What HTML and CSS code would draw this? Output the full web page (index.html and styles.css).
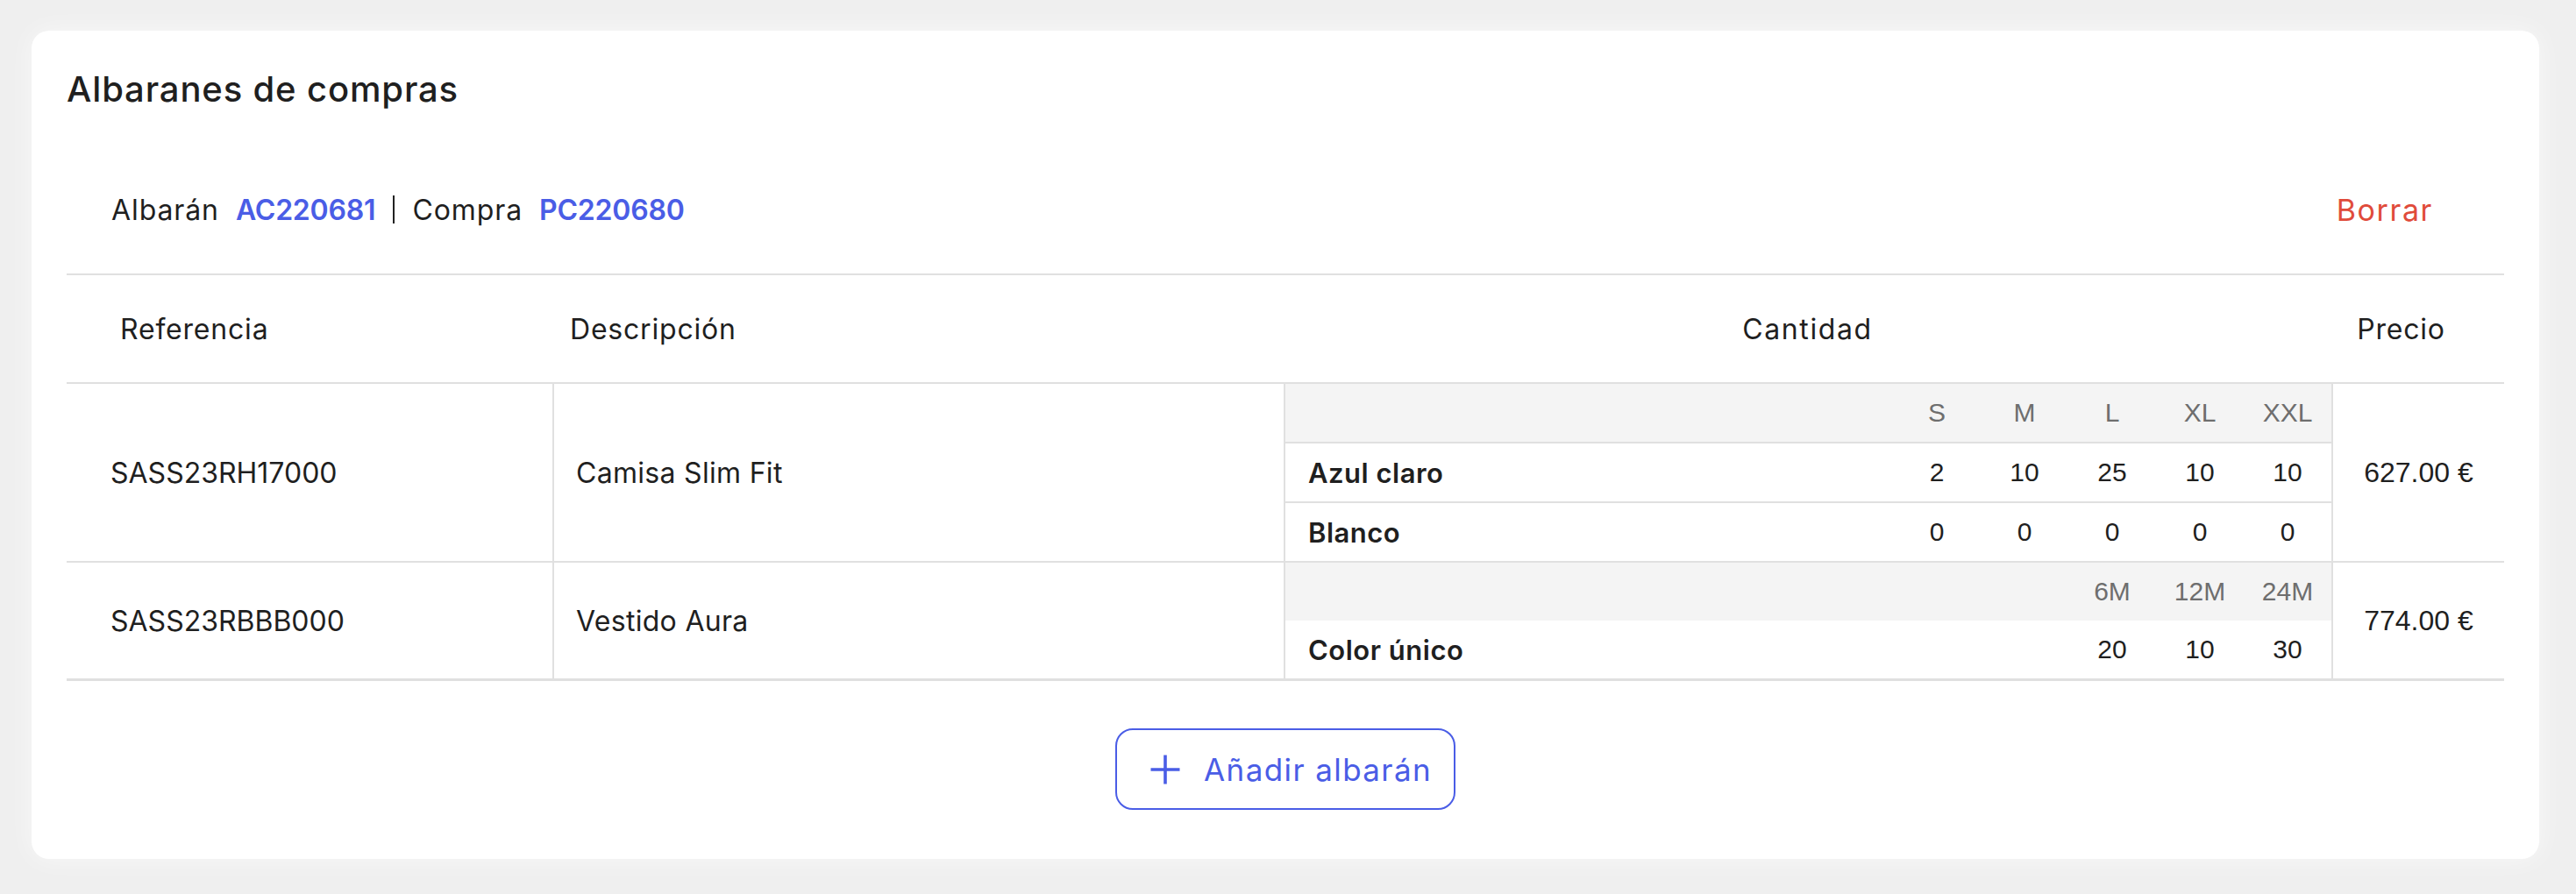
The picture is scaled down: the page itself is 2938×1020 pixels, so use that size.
FILE: index.html
```html
<!DOCTYPE html>
<html lang="es">
<head>
<meta charset="utf-8">
<title>Albaranes de compras</title>
<link rel="stylesheet" href="styles.css">
</head>
<body>
<div class="page">
  <section class="card">
    <h1 class="title">Albaranes de compras</h1>

    <div class="info">
      <div class="info-left">
        <span class="lead">Albarán</span>
        <a class="code">AC220681</a>
        <span class="sep"></span>
        <span class="lead">Compra</span>
        <a class="code">PC220680</a>
      </div>
      <button class="delete">Borrar</button>
    </div>

    <div class="table">
      <div class="row head">
        <div class="cell c-ref">Referencia</div>
        <div class="cell c-desc">Descripción</div>
        <div class="cell c-qty">Cantidad</div>
        <div class="cell c-price">Precio</div>
      </div>

      <div class="row item">
        <div class="cell c-ref">SASS23RH17000</div>
        <div class="cell c-desc">Camisa Slim Fit</div>
        <div class="cell c-qty">
          <div class="sizes lined">
            <div class="srow five shead"><span class="lbl"></span><span>S</span><span>M</span><span>L</span><span>XL</span><span>XXL</span></div>
            <div class="srow five"><span class="lbl">Azul claro</span><span>2</span><span>10</span><span>25</span><span>10</span><span>10</span></div>
            <div class="srow five"><span class="lbl">Blanco</span><span>0</span><span>0</span><span>0</span><span>0</span><span>0</span></div>
          </div>
        </div>
        <div class="cell c-price">627.00 €</div>
      </div>

      <div class="row item">
        <div class="cell c-ref">SASS23RBBB000</div>
        <div class="cell c-desc">Vestido Aura</div>
        <div class="cell c-qty">
          <div class="sizes">
            <div class="srow three shead"><span class="lbl"></span><span>6M</span><span>12M</span><span>24M</span></div>
            <div class="srow three"><span class="lbl">Color único</span><span>20</span><span>10</span><span>30</span></div>
          </div>
        </div>
        <div class="cell c-price">774.00 €</div>
      </div>
    </div>

    <div class="actions">
      <button class="add">
        <svg class="plus" width="36" height="36" viewBox="0 0 36 36" aria-hidden="true">
          <path d="M18 1.5v33M1.5 18h33" stroke="currentColor" stroke-width="3.6" fill="none"/>
        </svg>
        <span>Añadir albarán</span>
      </button>
    </div>
  </section>
</div>
</body>
</html>
```

FILE: styles.css
```css
* { box-sizing: border-box; }

body {
  margin: 0;
  background: #efefef;
  font-family: Inter, "Noto Sans", sans-serif;
  color: #1f1f1f;
}

.page {
  padding: 35px 42px 38px 36px;
}

.card {
  background: #ffffff;
  border-radius: 20px;
  padding: 0 40px 56px;
  box-shadow: 0 0 30px rgba(255, 255, 255, 0.6);
}

.title {
  margin: 0;
  padding-top: 40px;
  font-size: 40px;
  font-weight: 500;
  line-height: 54px;
  letter-spacing: 0.85px;
}

.info {
  box-sizing: content-box;
  display: flex;
  align-items: center;
  justify-content: space-between;
  height: 60px;
  margin-top: 80px;
  padding: 0 81px 43px 51px;
  border-bottom: 2px solid #e0e0e0;
  font-size: 32px;
}

.info-left {
  display: flex;
  align-items: center;
  gap: 19px;
}

.lead {
  letter-spacing: 0.9px;
}

.code {
  color: #4a5de6;
  font-weight: 600;
  letter-spacing: -0.2px;
}

.sep {
  width: 2px;
  height: 32px;
  background: #222;
  margin: 0 1px;
}

.delete {
  border: none;
  background: none;
  padding: 0;
  font-family: inherit;
  font-size: 34px;
  letter-spacing: 1.6px;
  color: #e04b3b;
  cursor: pointer;
}

.row {
  display: grid;
  grid-template-columns: 554px 834px 1195px 1fr;
}

.head {
  height: 124px;
  align-items: center;
  border-bottom: 2px solid #e0e0e0;
  font-size: 32px;
  letter-spacing: 0.8px;
}

.head .c-ref { padding-left: 61px; }
.head .c-desc { padding-left: 20px; }
.head .c-qty { text-align: center; letter-spacing: 1.6px; }
.head .c-price { text-align: center; padding-right: 38px; }

.item {
  border-bottom: 2px solid #e0e0e0;
  font-size: 32px;
}

.item:last-child {
  border-bottom-width: 3px;
}

.item .cell + .cell {
  border-left: 2px solid #e0e0e0;
}

.item .c-ref {
  display: flex;
  align-items: center;
  padding-left: 50px;
}

.item .c-desc {
  display: flex;
  align-items: center;
  padding-left: 25px;
  letter-spacing: 0.3px;
}

.item .c-price {
  display: flex;
  align-items: center;
  justify-content: center;
  font-family: "Liberation Sans", Arial, sans-serif;
  font-size: 32px;
}

.srow {
  display: grid;
  height: 66px;
  align-items: center;
  font-family: "Liberation Sans", Arial, sans-serif;
  font-size: 30px;
  text-align: center;
}

.srow.five { grid-template-columns: 1fr repeat(5, 100px); }
.srow.three { grid-template-columns: 1fr repeat(3, 100px); }

.shead {
  background: #f4f4f4;
  color: #6e6e6e;
}

.lined .srow + .srow {
  height: 68px;
  border-top: 2px solid #e0e0e0;
}

.lbl {
  text-align: left;
  padding-left: 26px;
  font-family: Inter, "Noto Sans", sans-serif;
  font-weight: 600;
  font-size: 31px;
  letter-spacing: 0.5px;
}

.actions {
  display: flex;
  justify-content: center;
  margin-top: 54px;
}

.add {
  display: flex;
  align-items: center;
  gap: 26px;
  width: 388px;
  height: 93px;
  padding: 0 0 0 37px;
  border: 2px solid #4a5de6;
  border-radius: 20px;
  background: #ffffff;
  color: #4a5de6;
  font-family: Inter, "Noto Sans", sans-serif;
  font-size: 35px;
  letter-spacing: 1.4px;
  cursor: pointer;
}

.plus {
  flex: none;
}
```
